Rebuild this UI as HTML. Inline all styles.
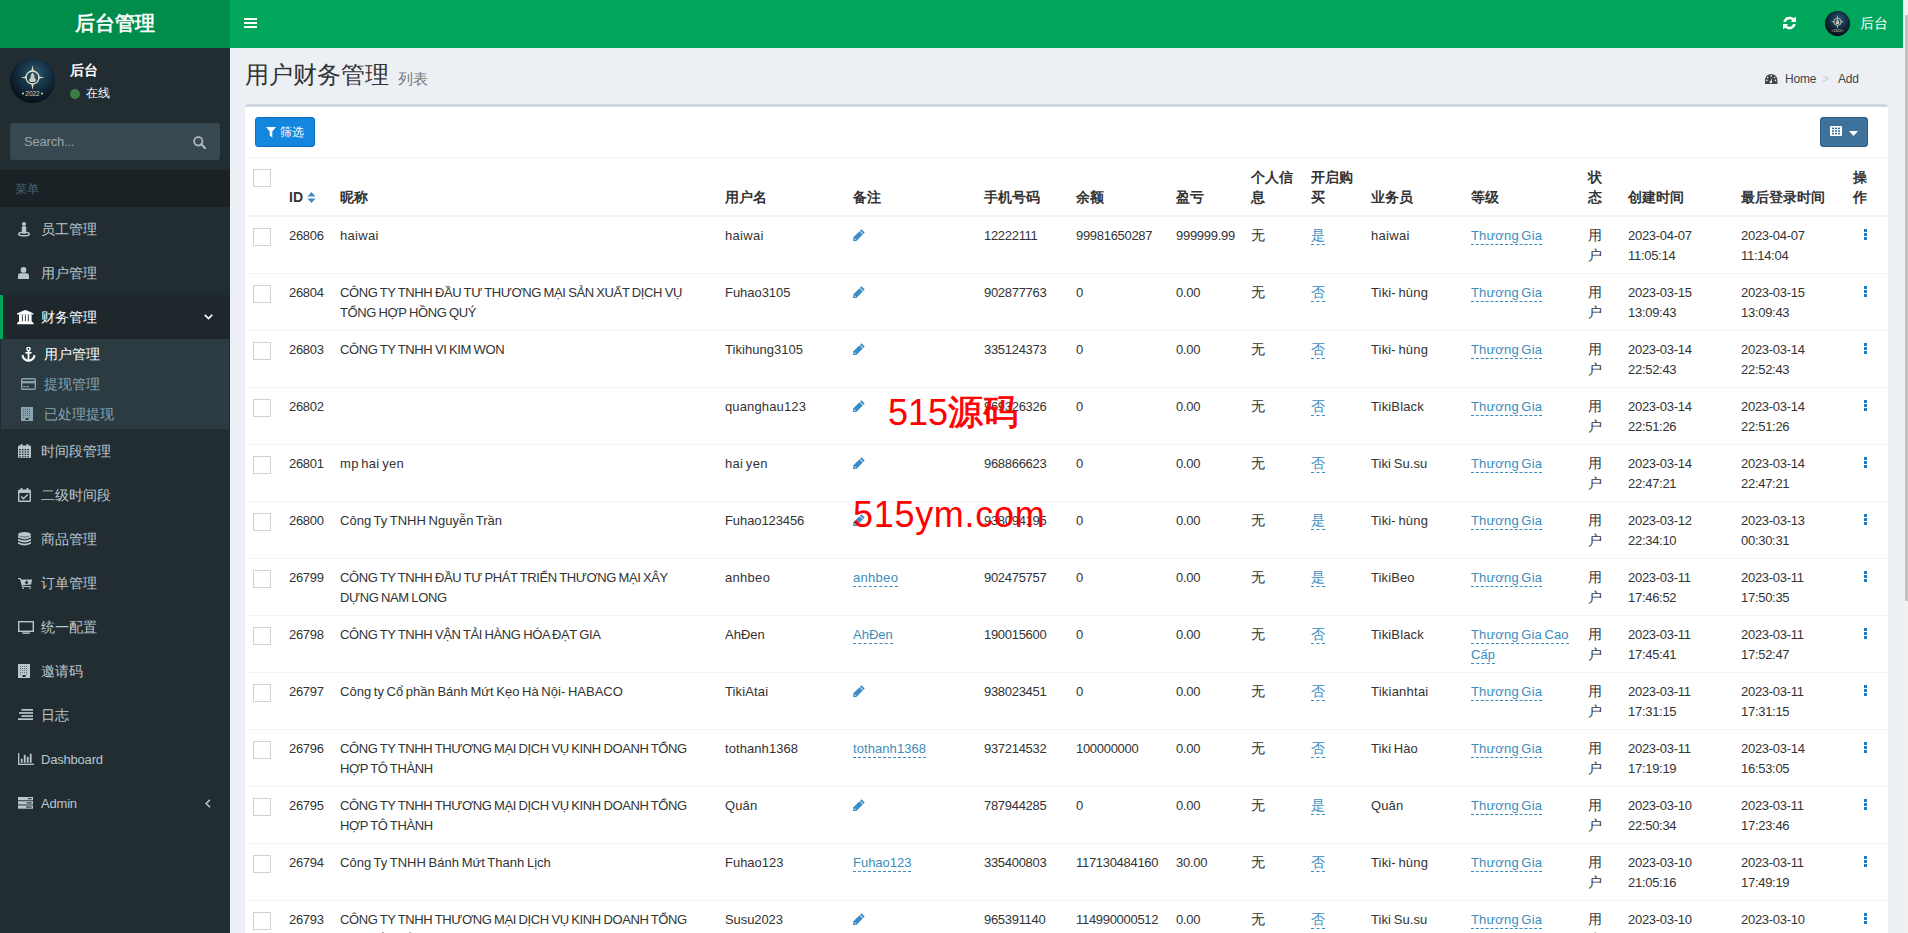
<!DOCTYPE html>
<html><head><meta charset="utf-8"><title>后台管理</title>
<style>
*{box-sizing:border-box}
html,body{margin:0;padding:0}
body{width:1908px;height:933px;overflow:hidden;position:relative;background:#ecf0f5;font-family:"Liberation Sans",sans-serif;font-size:14px;line-height:20px;color:#333}
.abs{position:absolute}
/* header */
#logo{left:0;top:0;width:230px;height:48px;background:#008d4c;color:#fff;font-size:20px;font-weight:bold;text-align:center;line-height:48px}
#logo span{position:absolute;left:75px;top:13px;line-height:20px;letter-spacing:0}
#nav{left:230px;top:0;width:1673px;height:48px;background:#00a65a;color:#fff}
#sb{left:1903px;top:0;width:5px;height:933px;background:#f1f1f1}
#thumb{left:1905px;top:15px;width:3px;height:586px;background:#c1c1c1}
/* sidebar */
#side{left:0;top:48px;width:230px;height:885px;background:#222d32;color:#b8c7ce}
.avatar{border-radius:50%;background:radial-gradient(circle at 50% 45%,#2d5a78 0%,#173247 40%,#0a1822 75%,#05090d 100%);overflow:hidden}
.menu-h{left:0;top:122px;width:230px;height:37px;background:#1a2226;color:#4b646f;font-size:12px}
.mi{position:absolute;left:0;width:230px;height:44px;color:#b8c7ce}
.mi .t{position:absolute;left:41px;top:12px;line-height:20px;white-space:nowrap}
.mi svg{position:absolute}
.sub{position:absolute;left:1px;width:228px;height:30px;color:#8aa4af}
.sub .t{position:absolute;left:43px;top:5px;line-height:20px;white-space:nowrap}
.sub svg{position:absolute}
/* content */
#title{left:245px;top:58px;font-size:24px;line-height:34px;color:#333;white-space:nowrap}
#title small{font-size:15px;color:#777;margin-left:9px;position:relative;top:1px}
#bc{left:1765px;top:69px;font-size:12px;line-height:20px;color:#444;white-space:nowrap}
#box{left:245px;top:104px;width:1643px;height:840px;background:#fff;border-top:3px solid #d2d6de;border-radius:3px}
#btn1{left:255px;top:117px;width:60px;height:30px;background:#1387de;border:1px solid #0b6fc2;border-radius:3px;color:#fff;font-size:12px}
#btn2{left:1820px;top:117px;width:48px;height:30px;background:#3e729b;border:1px solid #2e5c80;border-radius:3px}
#hline{left:245px;top:157px;width:1643px;height:1px;background:#f4f4f4}
table{position:absolute;left:245px;top:159px;width:1643px;border-collapse:collapse;table-layout:fixed}
th,td{padding:8px;text-align:left;vertical-align:top;line-height:20px}
th{vertical-align:bottom;font-weight:bold;font-size:14px;border-bottom:2px solid #f4f4f4;white-space:nowrap}
td{border-top:1px solid #f4f4f4;height:57px;white-space:nowrap;padding-top:9px;padding-bottom:7px}
tbody tr:first-child td{border-top:0;height:56px}
td.lt{font-size:13px;letter-spacing:-0.3px}
td.cj{font-size:14px;padding-top:8px;padding-bottom:8px}
.chk{display:block;width:18px;height:18px;border:1px solid #d2d2d2;margin:2px 0 0 0;background:#fff}
th .chk{margin-top:2px;margin-bottom:20px}
.ed{color:#3c8dbc;border-bottom:1px dashed #3c8dbc;padding-bottom:1px}
.pen{display:block;margin-top:3px}
.dots{display:block;margin:3px 0 0 11px}
</style></head><body>
<div id="logo" class="abs"><span>后台管理</span></div>
<div id="nav" class="abs">
  <svg class="abs" style="left:14px;top:18px" width="13" height="10" viewBox="0 0 13 10"><rect x="0" y="0" width="13" height="2" fill="#fff"/><rect x="0" y="4" width="13" height="2" fill="#fff"/><rect x="0" y="8" width="13" height="2" fill="#fff"/></svg>
  <svg class="abs" style="left:1552.7px;top:17px" width="13" height="12" viewBox="0 0 13 12" overflow="visible"><path d="M0.3 4.9 A6.3 6.3 0 0 1 10.55 1.2 L13 -0.2 L13 4.9 L7.7 4.9 L9.4 3.56 A3.8 3.8 0 0 0 2.86 4.9 Z" fill="#fff"/><path d="M0.3 4.9 A6.3 6.3 0 0 1 10.55 1.2 L13 -0.2 L13 4.9 L7.7 4.9 L9.4 3.56 A3.8 3.8 0 0 0 2.86 4.9 Z" fill="#fff" transform="rotate(180 6.5 6)"/></svg>
  <div class="abs avatar" style="left:1595px;top:11px;width:25px;height:25px"><svg width="100%" height="100%" viewBox="0 0 45 45" style="display:block"><defs><radialGradient id="ag2" cx="55%" cy="35%" r="70%"><stop offset="0" stop-color="#2b5874"/><stop offset="0.45" stop-color="#163246"/><stop offset="0.8" stop-color="#0a1823"/><stop offset="1" stop-color="#04080b"/></radialGradient></defs><circle cx="22.5" cy="22.5" r="22.5" fill="url(#ag2)"/><g fill="none" stroke="#e9e2c8" stroke-width="1.3"><circle cx="22.5" cy="19.5" r="6.5"/></g><g fill="#e9e2c8"><path d="M22.5 7 L23.6 13 L21.4 13 Z M22.5 32 L23.6 26 L21.4 26 Z M10.5 19.5 L16.5 18.4 L16.5 20.6 Z M34.5 19.5 L28.5 18.4 L28.5 20.6 Z"/><path d="M22.5 14.5 Q25 17 24.5 20 Q27 21 25 24 L20 24 Q18 21 20.5 20 Q20 17 22.5 14.5 Z" opacity="0.85"/><text x="22.5" y="37.5" font-size="6.5" text-anchor="middle" font-family="Liberation Sans" fill="#d8cfae">2022</text><circle cx="13" cy="35.5" r="1" /><circle cx="32" cy="35.5" r="1"/></g></svg></div>
  <div class="abs" style="left:1630px;top:13px;line-height:20px;font-size:14px;color:#fff">后台</div>
</div>
<div id="sb" class="abs"></div><div id="thumb" class="abs"></div>

<div id="side" class="abs">
  <div class="abs avatar" style="left:10px;top:10px;width:45px;height:45px"><svg width="100%" height="100%" viewBox="0 0 45 45" style="display:block"><defs><radialGradient id="ag" cx="55%" cy="35%" r="70%"><stop offset="0" stop-color="#2b5874"/><stop offset="0.45" stop-color="#163246"/><stop offset="0.8" stop-color="#0a1823"/><stop offset="1" stop-color="#04080b"/></radialGradient></defs><circle cx="22.5" cy="22.5" r="22.5" fill="url(#ag)"/><g fill="none" stroke="#e9e2c8" stroke-width="1.3"><circle cx="22.5" cy="19.5" r="6.5"/></g><g fill="#e9e2c8"><path d="M22.5 7 L23.6 13 L21.4 13 Z M22.5 32 L23.6 26 L21.4 26 Z M10.5 19.5 L16.5 18.4 L16.5 20.6 Z M34.5 19.5 L28.5 18.4 L28.5 20.6 Z"/><path d="M22.5 14.5 Q25 17 24.5 20 Q27 21 25 24 L20 24 Q18 21 20.5 20 Q20 17 22.5 14.5 Z" opacity="0.85"/><text x="22.5" y="37.5" font-size="6.5" text-anchor="middle" font-family="Liberation Sans" fill="#d8cfae">2022</text><circle cx="13" cy="35.5" r="1" /><circle cx="32" cy="35.5" r="1"/></g></svg></div>
  <div class="abs" style="left:70px;top:12px;font-weight:bold;color:#fff;font-size:14px;line-height:20px">后台</div>
  <div class="abs" style="left:70px;top:40.5px;width:10px;height:10px;border-radius:50%;background:#3d7d45"></div>
  <div class="abs" style="left:86px;top:35px;color:#fff;font-size:12px;line-height:20px">在线</div>
  <div class="abs" style="left:10px;top:75px;width:210px;height:37px;background:#374850;border-radius:3px">
    <span class="abs" style="left:14px;top:9px;color:#9aa5a9;font-size:13px;letter-spacing:-0.2px;line-height:20px">Search...</span>
    <svg class="abs" style="left:183px;top:13px" width="13" height="13" viewBox="0 0 13 13"><circle cx="5.3" cy="5.3" r="4.2" stroke="#b0b8bb" stroke-width="1.8" fill="none"/><path d="M8.3 8.3 L12 12" stroke="#b0b8bb" stroke-width="2.2" stroke-linecap="round"/></svg>
  </div>
  <div class="abs menu-h"><span class="abs" style="left:15px;top:9px;line-height:20px">菜单</span></div>
  <div class="mi" style="top:159px;color:#b8c7ce"><span style="position:absolute;left:17.5px;top:14.5px;line-height:0"><svg width="12" height="15" viewBox="0 0 12 15"><circle cx="6" cy="2" r="2" fill="#b8c7ce"/><rect x="3.8" y="4.3" width="4.4" height="7.4" rx="1" fill="#b8c7ce"/><ellipse cx="6" cy="12" rx="5.3" ry="1.8" fill="none" stroke="#b8c7ce" stroke-width="1.5"/></svg></span><span class="t">员工管理</span></div>
<div class="mi" style="top:203px;color:#b8c7ce"><span style="position:absolute;left:17.5px;top:16px;line-height:0"><svg width="11" height="12" viewBox="0 0 11 12"><circle cx="5.5" cy="2.9" r="2.9" fill="#b8c7ce"/><path d="M0 12 L0 8.6 Q0 6.3 2.4 6.3 L8.6 6.3 Q11 6.3 11 8.6 L11 12 Z" fill="#b8c7ce"/></svg></span><span class="t">用户管理</span></div>
<div class="mi" style="top:247px;background:#1e282c;color:#fff"><span style="position:absolute;left:17.3px;top:14.800000000000011px;line-height:0"><svg width="17" height="15" viewBox="0 0 17 15"><path d="M8.3 0 Q11 0.6 16.5 3.4 L16.5 4.6 L0 4.6 L0 3.4 Q5.6 0.6 8.3 0 Z" fill="#fff"/><rect x="2" y="4.4" width="12.6" height="7.4" fill="#fff"/><rect x="4.9" y="5.2" width="0.9" height="5.8" fill="#1e282c"/><rect x="7.9" y="5.2" width="0.9" height="5.8" fill="#1e282c"/><rect x="10.9" y="5.2" width="0.9" height="5.8" fill="#1e282c"/><path d="M1.6 11.6 L15 11.6 L16.5 13.2 L16.5 14.3 L0 14.3 L0 13.2 Z" fill="#fff"/></svg></span><span class="t">财务管理</span><div style="position:absolute;left:0;top:0;width:3px;height:44px;background:#00a65a"></div><svg style="position:absolute;left:204px;top:19px" width="9" height="6" viewBox="0 0 9 6"><path d="M0.8 0.8 L4.5 4.5 L8.2 0.8" fill="none" stroke="#fff" stroke-width="1.7"/></svg></div>
<div class="abs" style="left:1px;top:291px;width:228px;height:90px;background:#2c3b41"></div>
<div class="sub" style="top:291px;color:#fff"><span style="position:absolute;left:19.5px;top:7.699999999999989px;line-height:0"><svg width="15" height="15" viewBox="0 0 15 15"><circle cx="7.5" cy="2" r="1.6" fill="none" stroke="#fff" stroke-width="1.4"/><rect x="6.6" y="3.4" width="1.8" height="10" fill="#fff"/><rect x="4.4" y="5" width="6.2" height="1.6" fill="#fff"/><path d="M0.5 8.5 L3 7.8 L2.6 9 Q4 12.2 7.5 12.6 Q11 12.2 12.4 9 L12 7.8 L14.5 8.5 L14 10.5 Q12 14.5 7.5 14.8 Q3 14.5 1 10.5 Z" fill="#fff"/></svg></span><span class="t">用户管理</span></div>
<div class="sub" style="top:321px;color:#8aa4af"><span style="position:absolute;left:20px;top:9px;line-height:0"><svg width="15" height="12" viewBox="0 0 15 12"><rect x="0.7" y="0.7" width="13.6" height="10.6" rx="1" fill="none" stroke="#8aa4af" stroke-width="1.4"/><rect x="0.7" y="3" width="13.6" height="2.4" fill="#8aa4af"/><rect x="2.2" y="8" width="2.2" height="1.2" fill="#8aa4af"/><rect x="5.2" y="8" width="2.6" height="1.2" fill="#8aa4af"/></svg></span><span class="t">提现管理</span></div>
<div class="sub" style="top:351px;color:#8aa4af"><span style="position:absolute;left:20px;top:8px;line-height:0"><svg width="12" height="14" viewBox="0 0 12 14"><rect x="0" y="0" width="12" height="14" fill="#8aa4af"/><rect x="2" y="2" width="1" height="1" fill="#2c3b41" fill-opacity="0.6"/><rect x="2" y="4" width="1" height="1" fill="#2c3b41" fill-opacity="0.6"/><rect x="2" y="6" width="1" height="1" fill="#2c3b41" fill-opacity="0.6"/><rect x="2" y="8" width="1" height="1" fill="#2c3b41" fill-opacity="0.6"/><rect x="2" y="10" width="1" height="1" fill="#2c3b41" fill-opacity="0.6"/><rect x="4" y="2" width="1" height="1" fill="#2c3b41" fill-opacity="0.6"/><rect x="4" y="4" width="1" height="1" fill="#2c3b41" fill-opacity="0.6"/><rect x="4" y="6" width="1" height="1" fill="#2c3b41" fill-opacity="0.6"/><rect x="4" y="8" width="1" height="1" fill="#2c3b41" fill-opacity="0.6"/><rect x="6" y="2" width="1" height="1" fill="#2c3b41" fill-opacity="0.6"/><rect x="6" y="4" width="1" height="1" fill="#2c3b41" fill-opacity="0.6"/><rect x="6" y="6" width="1" height="1" fill="#2c3b41" fill-opacity="0.6"/><rect x="6" y="8" width="1" height="1" fill="#2c3b41" fill-opacity="0.6"/><rect x="8" y="2" width="1" height="1" fill="#2c3b41" fill-opacity="0.6"/><rect x="8" y="4" width="1" height="1" fill="#2c3b41" fill-opacity="0.6"/><rect x="8" y="6" width="1" height="1" fill="#2c3b41" fill-opacity="0.6"/><rect x="8" y="8" width="1" height="1" fill="#2c3b41" fill-opacity="0.6"/><rect x="8" y="10" width="1" height="1" fill="#2c3b41" fill-opacity="0.6"/><rect x="4.5" y="11" width="3" height="2" fill="#2c3b41"/></svg></span><span class="t">已处理提现</span></div>
<div class="mi" style="top:381px;color:#b8c7ce"><span style="position:absolute;left:18px;top:15px;line-height:0"><svg width="13" height="14" viewBox="0 0 13 14"><rect x="0" y="1.6" width="13" height="12.4" rx="1" fill="#b8c7ce"/><rect x="2.6" y="0" width="1.8" height="3.2" fill="#b8c7ce"/><rect x="8.6" y="0" width="1.8" height="3.2" fill="#b8c7ce"/><rect x="1.2" y="5.0" width="1.6" height="1.3" fill="#222d32"/><rect x="1.2" y="7.4" width="1.6" height="1.3" fill="#222d32"/><rect x="1.2" y="9.8" width="1.6" height="1.3" fill="#222d32"/><rect x="1.2" y="12.2" width="1.6" height="1.3" fill="#222d32"/><rect x="3.9" y="5.0" width="1.6" height="1.3" fill="#222d32"/><rect x="3.9" y="7.4" width="1.6" height="1.3" fill="#222d32"/><rect x="3.9" y="9.8" width="1.6" height="1.3" fill="#222d32"/><rect x="3.9" y="12.2" width="1.6" height="1.3" fill="#222d32"/><rect x="6.6" y="5.0" width="1.6" height="1.3" fill="#222d32"/><rect x="6.6" y="7.4" width="1.6" height="1.3" fill="#222d32"/><rect x="6.6" y="9.8" width="1.6" height="1.3" fill="#222d32"/><rect x="6.6" y="12.2" width="1.6" height="1.3" fill="#222d32"/><rect x="9.3" y="5.0" width="1.6" height="1.3" fill="#222d32"/><rect x="9.3" y="7.4" width="1.6" height="1.3" fill="#222d32"/><rect x="9.3" y="9.8" width="1.6" height="1.3" fill="#222d32"/><rect x="9.3" y="12.2" width="1.6" height="1.3" fill="#222d32"/></svg></span><span class="t">时间段管理</span></div>
<div class="mi" style="top:425px;color:#b8c7ce"><span style="position:absolute;left:18px;top:15px;line-height:0"><svg width="13" height="14" viewBox="0 0 13 14"><rect x="0.7" y="2.3" width="11.6" height="11" rx="0.8" fill="none" stroke="#b8c7ce" stroke-width="1.4"/><rect x="0.7" y="2.3" width="11.6" height="2.6" fill="#b8c7ce"/><rect x="2.6" y="0" width="1.8" height="3.4" fill="#b8c7ce"/><rect x="8.6" y="0" width="1.8" height="3.4" fill="#b8c7ce"/><path d="M3.2 8.6 L5.4 10.8 L9.8 6.4" fill="none" stroke="#b8c7ce" stroke-width="1.4"/></svg></span><span class="t">二级时间段</span></div>
<div class="mi" style="top:469px;color:#b8c7ce"><span style="position:absolute;left:18px;top:15px;line-height:0"><svg width="13" height="14" viewBox="0 0 13 14"><ellipse cx="6.5" cy="2.4" rx="6.5" ry="2.4" fill="#b8c7ce"/><path d="M0 3.6 Q6.5 7.2 13 3.6 L13 5.6 Q6.5 9.2 0 5.6 Z" fill="#b8c7ce"/><path d="M0 6.8 Q6.5 10.4 13 6.8 L13 8.8 Q6.5 12.4 0 8.8 Z" fill="#b8c7ce"/><path d="M0 10 Q6.5 13.6 13 10 L13 11.8 Q6.5 15.4 0 11.8 Z" fill="#b8c7ce"/></svg></span><span class="t">商品管理</span></div>
<div class="mi" style="top:513px;color:#b8c7ce"><span style="position:absolute;left:17.7px;top:17px;line-height:0"><svg width="14" height="11" viewBox="0 0 14 11"><path d="M0 0 L2.6 0 L3.2 1.6 L14 1.6 L13.2 6.6 L4.6 7.2 L4.9 8 L12.8 8 L12.8 9 L4.2 9 L2 1.2 L0 1.2 Z" fill="#b8c7ce"/><circle cx="5" cy="10.1" r="0.9" fill="#b8c7ce"/><circle cx="12" cy="10.1" r="0.9" fill="#b8c7ce"/><path d="M8.6 2.4 L8.6 5.6 M7 4 L8.6 5.6 L10.2 4" stroke="#222d32" stroke-width="1.1" fill="none"/></svg></span><span class="t">订单管理</span></div>
<div class="mi" style="top:557px;color:#b8c7ce"><span style="position:absolute;left:17.5px;top:15.5px;line-height:0"><svg width="16" height="13" viewBox="0 0 16 13"><rect x="0.7" y="0.7" width="14.6" height="9.6" fill="none" stroke="#b8c7ce" stroke-width="1.4"/><rect x="4.3" y="11.4" width="7.6" height="1.4" fill="#b8c7ce"/></svg></span><span class="t">统一配置</span></div>
<div class="mi" style="top:601px;color:#b8c7ce"><span style="position:absolute;left:18px;top:15px;line-height:0"><svg width="12" height="14" viewBox="0 0 12 14"><rect x="0" y="0" width="12" height="14" fill="#b8c7ce"/><rect x="2" y="2" width="1" height="1" fill="#222d32" fill-opacity="0.6"/><rect x="2" y="4" width="1" height="1" fill="#222d32" fill-opacity="0.6"/><rect x="2" y="6" width="1" height="1" fill="#222d32" fill-opacity="0.6"/><rect x="2" y="8" width="1" height="1" fill="#222d32" fill-opacity="0.6"/><rect x="2" y="10" width="1" height="1" fill="#222d32" fill-opacity="0.6"/><rect x="4" y="2" width="1" height="1" fill="#222d32" fill-opacity="0.6"/><rect x="4" y="4" width="1" height="1" fill="#222d32" fill-opacity="0.6"/><rect x="4" y="6" width="1" height="1" fill="#222d32" fill-opacity="0.6"/><rect x="4" y="8" width="1" height="1" fill="#222d32" fill-opacity="0.6"/><rect x="6" y="2" width="1" height="1" fill="#222d32" fill-opacity="0.6"/><rect x="6" y="4" width="1" height="1" fill="#222d32" fill-opacity="0.6"/><rect x="6" y="6" width="1" height="1" fill="#222d32" fill-opacity="0.6"/><rect x="6" y="8" width="1" height="1" fill="#222d32" fill-opacity="0.6"/><rect x="8" y="2" width="1" height="1" fill="#222d32" fill-opacity="0.6"/><rect x="8" y="4" width="1" height="1" fill="#222d32" fill-opacity="0.6"/><rect x="8" y="6" width="1" height="1" fill="#222d32" fill-opacity="0.6"/><rect x="8" y="8" width="1" height="1" fill="#222d32" fill-opacity="0.6"/><rect x="8" y="10" width="1" height="1" fill="#222d32" fill-opacity="0.6"/><rect x="4.5" y="11" width="3" height="2" fill="#222d32"/></svg></span><span class="t">邀请码</span></div>
<div class="mi" style="top:645px;color:#b8c7ce"><span style="position:absolute;left:17.7px;top:16px;line-height:0"><svg width="15" height="11" viewBox="0 0 15 11"><rect x="3.5" y="0" width="11.5" height="1.7" fill="#b8c7ce"/><rect x="1" y="3.1" width="14" height="1.7" fill="#b8c7ce"/><rect x="3.5" y="6.2" width="11.5" height="1.7" fill="#b8c7ce"/><rect x="0" y="9.3" width="15" height="1.7" fill="#b8c7ce"/></svg></span><span class="t">日志</span></div>
<div class="mi" style="top:689px;color:#b8c7ce"><span style="position:absolute;left:17.7px;top:16px;line-height:0"><svg width="16" height="12" viewBox="0 0 16 12"><rect x="0" y="0" width="1.3" height="12" fill="#b8c7ce"/><rect x="0" y="10.7" width="16" height="1.3" fill="#b8c7ce"/><rect x="2.8" y="5.8" width="1.8" height="4" fill="#b8c7ce"/><rect x="5.8" y="1.8" width="1.8" height="8" fill="#b8c7ce"/><rect x="8.8" y="3.8" width="1.8" height="6" fill="#b8c7ce"/><rect x="11.8" y="0.8" width="1.8" height="9" fill="#b8c7ce"/></svg></span><span class="t"><span style="font-size:13px;letter-spacing:-0.2px">Dashboard</span></span></div>
<div class="mi" style="top:733px;color:#b8c7ce"><span style="position:absolute;left:17.7px;top:16px;line-height:0"><svg width="15" height="12" viewBox="0 0 15 12"><rect x="0" y="0" width="15" height="3.3" fill="#b8c7ce"/><rect x="0" y="4.2" width="15" height="3.3" fill="#b8c7ce"/><rect x="0" y="8.4" width="15" height="3.3" fill="#b8c7ce"/><rect x="10" y="1.1" width="3.6" height="1.1" fill="#222d32"/><rect x="8.6" y="5.3" width="5" height="1.1" fill="#222d32"/><rect x="8" y="9.5" width="5.6" height="1.1" fill="#222d32"/></svg></span><span class="t"><span style="font-size:13px;letter-spacing:-0.2px">Admin</span></span><svg style="position:absolute;left:205px;top:18px" width="6" height="9" viewBox="0 0 6 9"><path d="M5 0.8 L1.2 4.5 L5 8.2" fill="none" stroke="#b8c7ce" stroke-width="1.6"/></svg></div>
</div>

<div id="title" class="abs">用户财务管理<small>列表</small></div>
<div id="bc" class="abs">
  <svg class="abs" style="left:0.2px;top:4.9px" width="12.4" height="10" viewBox="0 0 12.4 10"><path d="M0 10 L0 6.2 A6.2 6.2 0 0 1 12.4 6.2 L12.4 10 Z" fill="#444"/><g fill="#ecf0f5"><circle cx="6.2" cy="1.9" r="0.8"/><circle cx="2.6" cy="3.5" r="0.8"/><circle cx="9.6" cy="3.5" r="0.8"/><circle cx="1.8" cy="6.4" r="0.8"/><circle cx="10.5" cy="6.4" r="0.8"/><circle cx="5.9" cy="8" r="1.2"/></g><path d="M5.6 8 L6.9 3.2 L6.9 8.2 Z" fill="#ecf0f5"/></svg>
  <span class="abs" style="left:20px;top:0;letter-spacing:-0.2px">Home</span>
  <span class="abs" style="left:57px;top:0;color:#ccc">&gt;</span>
  <span class="abs" style="left:73px;top:0;letter-spacing:-0.2px">Add</span>
</div>

<div id="box" class="abs"></div>
<div id="btn1" class="abs">
  <svg class="abs" style="left:10px;top:9px" width="11" height="11" viewBox="0 0 11 11"><path d="M0 0 L10 0 L6.3 4.5 L6.3 10.5 L3.7 8.5 L3.7 4.5 Z" fill="#fff"/></svg>
  <span class="abs" style="left:24px;top:4px;line-height:20px">筛选</span>
</div>
<div id="btn2" class="abs">
  <svg class="abs" style="left:9px;top:8px" width="12" height="11" viewBox="0 0 12 11"><rect x="0" y="0" width="12" height="10" rx="1" fill="#fff"/><g fill="#3e729b"><rect x="2" y="1.6" width="2" height="1.6"/><rect x="5" y="1.6" width="2" height="1.6"/><rect x="8" y="1.6" width="2" height="1.6"/><rect x="2" y="4.2" width="2" height="1.6"/><rect x="5" y="4.2" width="2" height="1.6"/><rect x="8" y="4.2" width="2" height="1.6"/><rect x="2" y="6.8" width="2" height="1.6"/><rect x="5" y="6.8" width="2" height="1.6"/><rect x="8" y="6.8" width="2" height="1.6"/></g></svg>
  <svg class="abs" style="left:28px;top:13px" width="9" height="5" viewBox="0 0 9 5"><path d="M0 0 L9 0 L4.5 5 Z" fill="#fff"/></svg>
</div>
<div id="hline" class="abs"></div>

<table>
<colgroup><col style="width:36px"><col style="width:51px"><col style="width:385px"><col style="width:128px"><col style="width:131px"><col style="width:92px"><col style="width:100px"><col style="width:75px"><col style="width:60px"><col style="width:60px"><col style="width:100px"><col style="width:117px"><col style="width:40px"><col style="width:113px"><col style="width:112px"><col style="width:43px"></colgroup>
<thead><tr>
<th><i class="chk"></i></th>
<th>ID <svg width="9" height="11" viewBox="0 0 9 11" style="vertical-align:-1px"><path d="M0.5 4.5 L4.5 0 L8.5 4.5 Z M0.5 6.5 L8.5 6.5 L4.5 11 Z" fill="#3c8dbc"/></svg></th>
<th>昵称</th><th>用户名</th><th>备注</th><th>手机号码</th><th>余额</th><th>盈亏</th><th>个人信<br>息</th><th>开启购<br>买</th><th>业务员</th><th>等级</th><th>状<br>态</th><th>创建时间</th><th>最后登录时间</th><th>操<br>作</th>
</tr></thead>
<tbody>
<tr><td class="cb"><i class="chk"></i></td><td class="lt" style="letter-spacing:-0.30px;word-spacing:-0.70px">26806</td><td class="lt" style="letter-spacing:0.30px;word-spacing:-1.30px">haiwai</td><td class="lt" style="letter-spacing:0.30px;word-spacing:-1.30px">haiwai</td><td class="lt"><svg class="pen" width="12" height="12" viewBox="0 0 12 12"><path d="M8.4 0.3 L11.7 3.6 L10.3 5 L7 1.7 Z" fill="#3a8cc6"/><path d="M6.5 2.2 L9.8 5.5 L3.4 11.9 L0.1 11.9 L0.1 8.6 Z" fill="#3a8cc6"/><path d="M1.1 9.4 L2.6 10.9" stroke="#fff" stroke-width="1"/></svg></td><td class="lt" style="letter-spacing:-0.30px;word-spacing:-0.70px">12222111</td><td class="lt" style="letter-spacing:-0.30px;word-spacing:-0.70px">99981650287</td><td class="lt" style="letter-spacing:-0.29px;word-spacing:-0.71px">999999.99</td><td class="cj">无</td><td class="cj"><span class="ed">是</span></td><td class="lt" style="letter-spacing:0.30px;word-spacing:-1.30px">haiwai</td><td class="lt" style="letter-spacing:0.15px;word-spacing:-1.15px"><span class="ed">Thương Gia</span></td><td class="cj">用<br>户</td><td class="lt" style="letter-spacing:-0.29px;word-spacing:-0.71px">2023-04-07<br>11:05:14</td><td class="lt" style="letter-spacing:-0.29px;word-spacing:-0.71px">2023-04-07<br>11:14:04</td><td class="op"><svg class="dots" width="3" height="11" viewBox="0 0 3 11"><rect x="0" y="0" width="3" height="3" fill="#1f7bc0"/><rect x="0" y="4" width="3" height="3" fill="#1f7bc0"/><rect x="0" y="8" width="3" height="3" fill="#1f7bc0"/></svg></td></tr>
<tr><td class="cb"><i class="chk"></i></td><td class="lt" style="letter-spacing:-0.30px;word-spacing:-0.70px">26804</td><td class="lt" style="letter-spacing:-0.39px;word-spacing:-0.61px">CÔNG TY TNHH ĐẦU TƯ THƯƠNG MẠI SẢN XUẤT DỊCH VỤ<br>TỔNG HỢP HỒNG QUÝ</td><td class="lt" style="letter-spacing:-0.04px;word-spacing:-0.96px">Fuhao3105</td><td class="lt"><svg class="pen" width="12" height="12" viewBox="0 0 12 12"><path d="M8.4 0.3 L11.7 3.6 L10.3 5 L7 1.7 Z" fill="#3a8cc6"/><path d="M6.5 2.2 L9.8 5.5 L3.4 11.9 L0.1 11.9 L0.1 8.6 Z" fill="#3a8cc6"/><path d="M1.1 9.4 L2.6 10.9" stroke="#fff" stroke-width="1"/></svg></td><td class="lt" style="letter-spacing:-0.30px;word-spacing:-0.70px">902877763</td><td class="lt" style="letter-spacing:-0.30px;word-spacing:-0.70px">0</td><td class="lt" style="letter-spacing:-0.29px;word-spacing:-0.71px">0.00</td><td class="cj">无</td><td class="cj"><span class="ed">否</span></td><td class="lt" style="letter-spacing:0.16px;word-spacing:-1.16px">Tiki- hùng</td><td class="lt" style="letter-spacing:0.15px;word-spacing:-1.15px"><span class="ed">Thương Gia</span></td><td class="cj">用<br>户</td><td class="lt" style="letter-spacing:-0.29px;word-spacing:-0.71px">2023-03-15<br>13:09:43</td><td class="lt" style="letter-spacing:-0.29px;word-spacing:-0.71px">2023-03-15<br>13:09:43</td><td class="op"><svg class="dots" width="3" height="11" viewBox="0 0 3 11"><rect x="0" y="0" width="3" height="3" fill="#1f7bc0"/><rect x="0" y="4" width="3" height="3" fill="#1f7bc0"/><rect x="0" y="8" width="3" height="3" fill="#1f7bc0"/></svg></td></tr>
<tr><td class="cb"><i class="chk"></i></td><td class="lt" style="letter-spacing:-0.30px;word-spacing:-0.70px">26803</td><td class="lt" style="letter-spacing:-0.39px;word-spacing:-0.61px">CÔNG TY TNHH VI KIM WON</td><td class="lt" style="letter-spacing:0.04px;word-spacing:-1.04px">Tikihung3105</td><td class="lt"><svg class="pen" width="12" height="12" viewBox="0 0 12 12"><path d="M8.4 0.3 L11.7 3.6 L10.3 5 L7 1.7 Z" fill="#3a8cc6"/><path d="M6.5 2.2 L9.8 5.5 L3.4 11.9 L0.1 11.9 L0.1 8.6 Z" fill="#3a8cc6"/><path d="M1.1 9.4 L2.6 10.9" stroke="#fff" stroke-width="1"/></svg></td><td class="lt" style="letter-spacing:-0.30px;word-spacing:-0.70px">335124373</td><td class="lt" style="letter-spacing:-0.30px;word-spacing:-0.70px">0</td><td class="lt" style="letter-spacing:-0.29px;word-spacing:-0.71px">0.00</td><td class="cj">无</td><td class="cj"><span class="ed">否</span></td><td class="lt" style="letter-spacing:0.16px;word-spacing:-1.16px">Tiki- hùng</td><td class="lt" style="letter-spacing:0.15px;word-spacing:-1.15px"><span class="ed">Thương Gia</span></td><td class="cj">用<br>户</td><td class="lt" style="letter-spacing:-0.29px;word-spacing:-0.71px">2023-03-14<br>22:52:43</td><td class="lt" style="letter-spacing:-0.29px;word-spacing:-0.71px">2023-03-14<br>22:52:43</td><td class="op"><svg class="dots" width="3" height="11" viewBox="0 0 3 11"><rect x="0" y="0" width="3" height="3" fill="#1f7bc0"/><rect x="0" y="4" width="3" height="3" fill="#1f7bc0"/><rect x="0" y="8" width="3" height="3" fill="#1f7bc0"/></svg></td></tr>
<tr><td class="cb"><i class="chk"></i></td><td class="lt" style="letter-spacing:-0.30px;word-spacing:-0.70px">26802</td><td class="lt"></td><td class="lt" style="letter-spacing:0.14px;word-spacing:-1.14px">quanghau123</td><td class="lt"><svg class="pen" width="12" height="12" viewBox="0 0 12 12"><path d="M8.4 0.3 L11.7 3.6 L10.3 5 L7 1.7 Z" fill="#3a8cc6"/><path d="M6.5 2.2 L9.8 5.5 L3.4 11.9 L0.1 11.9 L0.1 8.6 Z" fill="#3a8cc6"/><path d="M1.1 9.4 L2.6 10.9" stroke="#fff" stroke-width="1"/></svg></td><td class="lt" style="letter-spacing:-0.30px;word-spacing:-0.70px">969326326</td><td class="lt" style="letter-spacing:-0.30px;word-spacing:-0.70px">0</td><td class="lt" style="letter-spacing:-0.29px;word-spacing:-0.71px">0.00</td><td class="cj">无</td><td class="cj"><span class="ed">否</span></td><td class="lt" style="letter-spacing:0.15px;word-spacing:-1.15px">TikiBlack</td><td class="lt" style="letter-spacing:0.15px;word-spacing:-1.15px"><span class="ed">Thương Gia</span></td><td class="cj">用<br>户</td><td class="lt" style="letter-spacing:-0.29px;word-spacing:-0.71px">2023-03-14<br>22:51:26</td><td class="lt" style="letter-spacing:-0.29px;word-spacing:-0.71px">2023-03-14<br>22:51:26</td><td class="op"><svg class="dots" width="3" height="11" viewBox="0 0 3 11"><rect x="0" y="0" width="3" height="3" fill="#1f7bc0"/><rect x="0" y="4" width="3" height="3" fill="#1f7bc0"/><rect x="0" y="8" width="3" height="3" fill="#1f7bc0"/></svg></td></tr>
<tr><td class="cb"><i class="chk"></i></td><td class="lt" style="letter-spacing:-0.30px;word-spacing:-0.70px">26801</td><td class="lt" style="letter-spacing:0.30px;word-spacing:-1.30px">mp hai yen</td><td class="lt" style="letter-spacing:0.30px;word-spacing:-1.30px">hai yen</td><td class="lt"><svg class="pen" width="12" height="12" viewBox="0 0 12 12"><path d="M8.4 0.3 L11.7 3.6 L10.3 5 L7 1.7 Z" fill="#3a8cc6"/><path d="M6.5 2.2 L9.8 5.5 L3.4 11.9 L0.1 11.9 L0.1 8.6 Z" fill="#3a8cc6"/><path d="M1.1 9.4 L2.6 10.9" stroke="#fff" stroke-width="1"/></svg></td><td class="lt" style="letter-spacing:-0.30px;word-spacing:-0.70px">968866623</td><td class="lt" style="letter-spacing:-0.30px;word-spacing:-0.70px">0</td><td class="lt" style="letter-spacing:-0.29px;word-spacing:-0.71px">0.00</td><td class="cj">无</td><td class="cj"><span class="ed">否</span></td><td class="lt" style="letter-spacing:0.09px;word-spacing:-1.09px">Tiki Su.su</td><td class="lt" style="letter-spacing:0.15px;word-spacing:-1.15px"><span class="ed">Thương Gia</span></td><td class="cj">用<br>户</td><td class="lt" style="letter-spacing:-0.29px;word-spacing:-0.71px">2023-03-14<br>22:47:21</td><td class="lt" style="letter-spacing:-0.29px;word-spacing:-0.71px">2023-03-14<br>22:47:21</td><td class="op"><svg class="dots" width="3" height="11" viewBox="0 0 3 11"><rect x="0" y="0" width="3" height="3" fill="#1f7bc0"/><rect x="0" y="4" width="3" height="3" fill="#1f7bc0"/><rect x="0" y="8" width="3" height="3" fill="#1f7bc0"/></svg></td></tr>
<tr><td class="cb"><i class="chk"></i></td><td class="lt" style="letter-spacing:-0.30px;word-spacing:-0.70px">26800</td><td class="lt" style="letter-spacing:0.02px;word-spacing:-1.02px">Công Ty TNHH Nguyễn Trần</td><td class="lt" style="letter-spacing:-0.09px;word-spacing:-0.91px">Fuhao123456</td><td class="lt"><svg class="pen" width="12" height="12" viewBox="0 0 12 12"><path d="M8.4 0.3 L11.7 3.6 L10.3 5 L7 1.7 Z" fill="#3a8cc6"/><path d="M6.5 2.2 L9.8 5.5 L3.4 11.9 L0.1 11.9 L0.1 8.6 Z" fill="#3a8cc6"/><path d="M1.1 9.4 L2.6 10.9" stroke="#fff" stroke-width="1"/></svg></td><td class="lt" style="letter-spacing:-0.30px;word-spacing:-0.70px">938094195</td><td class="lt" style="letter-spacing:-0.30px;word-spacing:-0.70px">0</td><td class="lt" style="letter-spacing:-0.29px;word-spacing:-0.71px">0.00</td><td class="cj">无</td><td class="cj"><span class="ed">是</span></td><td class="lt" style="letter-spacing:0.16px;word-spacing:-1.16px">Tiki- hùng</td><td class="lt" style="letter-spacing:0.15px;word-spacing:-1.15px"><span class="ed">Thương Gia</span></td><td class="cj">用<br>户</td><td class="lt" style="letter-spacing:-0.29px;word-spacing:-0.71px">2023-03-12<br>22:34:10</td><td class="lt" style="letter-spacing:-0.29px;word-spacing:-0.71px">2023-03-13<br>00:30:31</td><td class="op"><svg class="dots" width="3" height="11" viewBox="0 0 3 11"><rect x="0" y="0" width="3" height="3" fill="#1f7bc0"/><rect x="0" y="4" width="3" height="3" fill="#1f7bc0"/><rect x="0" y="8" width="3" height="3" fill="#1f7bc0"/></svg></td></tr>
<tr><td class="cb"><i class="chk"></i></td><td class="lt" style="letter-spacing:-0.30px;word-spacing:-0.70px">26799</td><td class="lt" style="letter-spacing:-0.39px;word-spacing:-0.61px">CÔNG TY TNHH ĐẦU TƯ PHÁT TRIỂN THƯƠNG MẠI XÂY<br>DỰNG NAM LONG</td><td class="lt" style="letter-spacing:0.30px;word-spacing:-1.30px">anhbeo</td><td class="lt" style="letter-spacing:0.30px;word-spacing:-1.30px"><span class="ed">anhbeo</span></td><td class="lt" style="letter-spacing:-0.30px;word-spacing:-0.70px">902475757</td><td class="lt" style="letter-spacing:-0.30px;word-spacing:-0.70px">0</td><td class="lt" style="letter-spacing:-0.29px;word-spacing:-0.71px">0.00</td><td class="cj">无</td><td class="cj"><span class="ed">是</span></td><td class="lt" style="letter-spacing:0.10px;word-spacing:-1.10px">TikiBeo</td><td class="lt" style="letter-spacing:0.15px;word-spacing:-1.15px"><span class="ed">Thương Gia</span></td><td class="cj">用<br>户</td><td class="lt" style="letter-spacing:-0.29px;word-spacing:-0.71px">2023-03-11<br>17:46:52</td><td class="lt" style="letter-spacing:-0.29px;word-spacing:-0.71px">2023-03-11<br>17:50:35</td><td class="op"><svg class="dots" width="3" height="11" viewBox="0 0 3 11"><rect x="0" y="0" width="3" height="3" fill="#1f7bc0"/><rect x="0" y="4" width="3" height="3" fill="#1f7bc0"/><rect x="0" y="8" width="3" height="3" fill="#1f7bc0"/></svg></td></tr>
<tr><td class="cb"><i class="chk"></i></td><td class="lt" style="letter-spacing:-0.30px;word-spacing:-0.70px">26798</td><td class="lt" style="letter-spacing:-0.39px;word-spacing:-0.61px">CÔNG TY TNHH VẬN TẢI HÀNG HÓA ĐẠT GIA</td><td class="lt" style="letter-spacing:0.02px;word-spacing:-1.02px">AhĐen</td><td class="lt" style="letter-spacing:0.02px;word-spacing:-1.02px"><span class="ed">AhĐen</span></td><td class="lt" style="letter-spacing:-0.30px;word-spacing:-0.70px">190015600</td><td class="lt" style="letter-spacing:-0.30px;word-spacing:-0.70px">0</td><td class="lt" style="letter-spacing:-0.29px;word-spacing:-0.71px">0.00</td><td class="cj">无</td><td class="cj"><span class="ed">否</span></td><td class="lt" style="letter-spacing:0.15px;word-spacing:-1.15px">TikiBlack</td><td class="lt" style="letter-spacing:0.12px;word-spacing:-1.12px"><span class="ed">Thương Gia Cao<br>Cấp</span></td><td class="cj">用<br>户</td><td class="lt" style="letter-spacing:-0.29px;word-spacing:-0.71px">2023-03-11<br>17:45:41</td><td class="lt" style="letter-spacing:-0.29px;word-spacing:-0.71px">2023-03-11<br>17:52:47</td><td class="op"><svg class="dots" width="3" height="11" viewBox="0 0 3 11"><rect x="0" y="0" width="3" height="3" fill="#1f7bc0"/><rect x="0" y="4" width="3" height="3" fill="#1f7bc0"/><rect x="0" y="8" width="3" height="3" fill="#1f7bc0"/></svg></td></tr>
<tr><td class="cb"><i class="chk"></i></td><td class="lt" style="letter-spacing:-0.30px;word-spacing:-0.70px">26797</td><td class="lt" style="letter-spacing:0.02px;word-spacing:-1.02px">Công ty Cổ phần Bánh Mứt Kẹo Hà Nội- HABACO</td><td class="lt" style="letter-spacing:0.13px;word-spacing:-1.13px">TikiAtai</td><td class="lt"><svg class="pen" width="12" height="12" viewBox="0 0 12 12"><path d="M8.4 0.3 L11.7 3.6 L10.3 5 L7 1.7 Z" fill="#3a8cc6"/><path d="M6.5 2.2 L9.8 5.5 L3.4 11.9 L0.1 11.9 L0.1 8.6 Z" fill="#3a8cc6"/><path d="M1.1 9.4 L2.6 10.9" stroke="#fff" stroke-width="1"/></svg></td><td class="lt" style="letter-spacing:-0.30px;word-spacing:-0.70px">938023451</td><td class="lt" style="letter-spacing:-0.30px;word-spacing:-0.70px">0</td><td class="lt" style="letter-spacing:-0.29px;word-spacing:-0.71px">0.00</td><td class="cj">无</td><td class="cj"><span class="ed">否</span></td><td class="lt" style="letter-spacing:0.23px;word-spacing:-1.23px">Tikianhtai</td><td class="lt" style="letter-spacing:0.15px;word-spacing:-1.15px"><span class="ed">Thương Gia</span></td><td class="cj">用<br>户</td><td class="lt" style="letter-spacing:-0.29px;word-spacing:-0.71px">2023-03-11<br>17:31:15</td><td class="lt" style="letter-spacing:-0.29px;word-spacing:-0.71px">2023-03-11<br>17:31:15</td><td class="op"><svg class="dots" width="3" height="11" viewBox="0 0 3 11"><rect x="0" y="0" width="3" height="3" fill="#1f7bc0"/><rect x="0" y="4" width="3" height="3" fill="#1f7bc0"/><rect x="0" y="8" width="3" height="3" fill="#1f7bc0"/></svg></td></tr>
<tr><td class="cb"><i class="chk"></i></td><td class="lt" style="letter-spacing:-0.30px;word-spacing:-0.70px">26796</td><td class="lt" style="letter-spacing:-0.39px;word-spacing:-0.61px">CÔNG TY TNHH THƯƠNG MẠI DỊCH VỤ KINH DOANH TỔNG<br>HỢP TÔ THÀNH</td><td class="lt" style="letter-spacing:0.08px;word-spacing:-1.08px">tothanh1368</td><td class="lt" style="letter-spacing:0.08px;word-spacing:-1.08px"><span class="ed">tothanh1368</span></td><td class="lt" style="letter-spacing:-0.30px;word-spacing:-0.70px">937214532</td><td class="lt" style="letter-spacing:-0.30px;word-spacing:-0.70px">100000000</td><td class="lt" style="letter-spacing:-0.29px;word-spacing:-0.71px">0.00</td><td class="cj">无</td><td class="cj"><span class="ed">否</span></td><td class="lt" style="letter-spacing:0.10px;word-spacing:-1.10px">Tiki Hào</td><td class="lt" style="letter-spacing:0.15px;word-spacing:-1.15px"><span class="ed">Thương Gia</span></td><td class="cj">用<br>户</td><td class="lt" style="letter-spacing:-0.29px;word-spacing:-0.71px">2023-03-11<br>17:19:19</td><td class="lt" style="letter-spacing:-0.29px;word-spacing:-0.71px">2023-03-14<br>16:53:05</td><td class="op"><svg class="dots" width="3" height="11" viewBox="0 0 3 11"><rect x="0" y="0" width="3" height="3" fill="#1f7bc0"/><rect x="0" y="4" width="3" height="3" fill="#1f7bc0"/><rect x="0" y="8" width="3" height="3" fill="#1f7bc0"/></svg></td></tr>
<tr><td class="cb"><i class="chk"></i></td><td class="lt" style="letter-spacing:-0.30px;word-spacing:-0.70px">26795</td><td class="lt" style="letter-spacing:-0.39px;word-spacing:-0.61px">CÔNG TY TNHH THƯƠNG MẠI DỊCH VỤ KINH DOANH TỔNG<br>HỢP TÔ THÀNH</td><td class="lt" style="letter-spacing:0.13px;word-spacing:-1.13px">Quân</td><td class="lt"><svg class="pen" width="12" height="12" viewBox="0 0 12 12"><path d="M8.4 0.3 L11.7 3.6 L10.3 5 L7 1.7 Z" fill="#3a8cc6"/><path d="M6.5 2.2 L9.8 5.5 L3.4 11.9 L0.1 11.9 L0.1 8.6 Z" fill="#3a8cc6"/><path d="M1.1 9.4 L2.6 10.9" stroke="#fff" stroke-width="1"/></svg></td><td class="lt" style="letter-spacing:-0.30px;word-spacing:-0.70px">787944285</td><td class="lt" style="letter-spacing:-0.30px;word-spacing:-0.70px">0</td><td class="lt" style="letter-spacing:-0.29px;word-spacing:-0.71px">0.00</td><td class="cj">无</td><td class="cj"><span class="ed">是</span></td><td class="lt" style="letter-spacing:0.13px;word-spacing:-1.13px">Quân</td><td class="lt" style="letter-spacing:0.15px;word-spacing:-1.15px"><span class="ed">Thương Gia</span></td><td class="cj">用<br>户</td><td class="lt" style="letter-spacing:-0.29px;word-spacing:-0.71px">2023-03-10<br>22:50:34</td><td class="lt" style="letter-spacing:-0.29px;word-spacing:-0.71px">2023-03-11<br>17:23:46</td><td class="op"><svg class="dots" width="3" height="11" viewBox="0 0 3 11"><rect x="0" y="0" width="3" height="3" fill="#1f7bc0"/><rect x="0" y="4" width="3" height="3" fill="#1f7bc0"/><rect x="0" y="8" width="3" height="3" fill="#1f7bc0"/></svg></td></tr>
<tr><td class="cb"><i class="chk"></i></td><td class="lt" style="letter-spacing:-0.30px;word-spacing:-0.70px">26794</td><td class="lt" style="letter-spacing:0.03px;word-spacing:-1.03px">Công Ty TNHH Bánh Mứt Thanh Lịch</td><td class="lt" style="letter-spacing:-0.01px;word-spacing:-0.99px">Fuhao123</td><td class="lt" style="letter-spacing:-0.01px;word-spacing:-0.99px"><span class="ed">Fuhao123</span></td><td class="lt" style="letter-spacing:-0.30px;word-spacing:-0.70px">335400803</td><td class="lt" style="letter-spacing:-0.30px;word-spacing:-0.70px">117130484160</td><td class="lt" style="letter-spacing:-0.29px;word-spacing:-0.71px">30.00</td><td class="cj">无</td><td class="cj"><span class="ed">否</span></td><td class="lt" style="letter-spacing:0.16px;word-spacing:-1.16px">Tiki- hùng</td><td class="lt" style="letter-spacing:0.15px;word-spacing:-1.15px"><span class="ed">Thương Gia</span></td><td class="cj">用<br>户</td><td class="lt" style="letter-spacing:-0.29px;word-spacing:-0.71px">2023-03-10<br>21:05:16</td><td class="lt" style="letter-spacing:-0.29px;word-spacing:-0.71px">2023-03-11<br>17:49:19</td><td class="op"><svg class="dots" width="3" height="11" viewBox="0 0 3 11"><rect x="0" y="0" width="3" height="3" fill="#1f7bc0"/><rect x="0" y="4" width="3" height="3" fill="#1f7bc0"/><rect x="0" y="8" width="3" height="3" fill="#1f7bc0"/></svg></td></tr>
<tr><td class="cb"><i class="chk"></i></td><td class="lt" style="letter-spacing:-0.30px;word-spacing:-0.70px">26793</td><td class="lt" style="letter-spacing:-0.39px;word-spacing:-0.61px">CÔNG TY TNHH THƯƠNG MẠI DỊCH VỤ KINH DOANH TỔNG<br>HỢP TÔ THÀNH</td><td class="lt" style="letter-spacing:-0.09px;word-spacing:-0.91px">Susu2023</td><td class="lt"><svg class="pen" width="12" height="12" viewBox="0 0 12 12"><path d="M8.4 0.3 L11.7 3.6 L10.3 5 L7 1.7 Z" fill="#3a8cc6"/><path d="M6.5 2.2 L9.8 5.5 L3.4 11.9 L0.1 11.9 L0.1 8.6 Z" fill="#3a8cc6"/><path d="M1.1 9.4 L2.6 10.9" stroke="#fff" stroke-width="1"/></svg></td><td class="lt" style="letter-spacing:-0.30px;word-spacing:-0.70px">965391140</td><td class="lt" style="letter-spacing:-0.30px;word-spacing:-0.70px">114990000512</td><td class="lt" style="letter-spacing:-0.29px;word-spacing:-0.71px">0.00</td><td class="cj">无</td><td class="cj"><span class="ed">否</span></td><td class="lt" style="letter-spacing:0.09px;word-spacing:-1.09px">Tiki Su.su</td><td class="lt" style="letter-spacing:0.15px;word-spacing:-1.15px"><span class="ed">Thương Gia</span></td><td class="cj">用<br>户</td><td class="lt" style="letter-spacing:-0.29px;word-spacing:-0.71px">2023-03-10<br>22:50:34</td><td class="lt" style="letter-spacing:-0.29px;word-spacing:-0.71px">2023-03-10<br>22:50:34</td><td class="op"><svg class="dots" width="3" height="11" viewBox="0 0 3 11"><rect x="0" y="0" width="3" height="3" fill="#1f7bc0"/><rect x="0" y="4" width="3" height="3" fill="#1f7bc0"/><rect x="0" y="8" width="3" height="3" fill="#1f7bc0"/></svg></td></tr>
</tbody></table>

<div class="abs" style="left:888px;top:388px;color:#f00;font-size:36px;line-height:50px;white-space:nowrap">515<span style="font-size:34.5px;-webkit-text-stroke:0.8px #f00;position:relative;top:-1.5px">源码</span></div>
<div class="abs" style="left:853px;top:490px;color:#f00;font-size:36px;letter-spacing:0.7px;line-height:50px;white-space:nowrap">515ym.com</div>
</body></html>
